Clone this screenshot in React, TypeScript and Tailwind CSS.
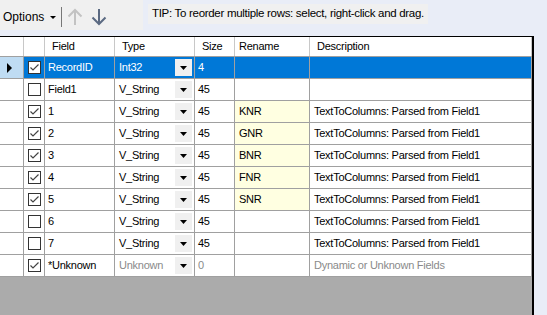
import { ReactNode } from "react"

type Row = {
    checked: boolean
    field: string
    type: string
    size: string
    rename: string
    desc: string
    selected?: boolean
    muted?: boolean
    yellow?: boolean
}

const rows: Row[] = [
    { checked: true, field: "RecordID", type: "Int32", size: "4", rename: "", desc: "", selected: true },
    { checked: false, field: "Field1", type: "V_String", size: "45", rename: "", desc: "" },
    { checked: true, field: "1", type: "V_String", size: "45", rename: "KNR", desc: "TextToColumns: Parsed from Field1", yellow: true },
    { checked: true, field: "2", type: "V_String", size: "45", rename: "GNR", desc: "TextToColumns: Parsed from Field1", yellow: true },
    { checked: true, field: "3", type: "V_String", size: "45", rename: "BNR", desc: "TextToColumns: Parsed from Field1", yellow: true },
    { checked: true, field: "4", type: "V_String", size: "45", rename: "FNR", desc: "TextToColumns: Parsed from Field1", yellow: true },
    { checked: true, field: "5", type: "V_String", size: "45", rename: "SNR", desc: "TextToColumns: Parsed from Field1", yellow: true },
    { checked: false, field: "6", type: "V_String", size: "45", rename: "", desc: "TextToColumns: Parsed from Field1" },
    { checked: false, field: "7", type: "V_String", size: "45", rename: "", desc: "TextToColumns: Parsed from Field1" },
    { checked: true, field: "*Unknown", type: "Unknown", size: "0", rename: "", desc: "Dynamic or Unknown Fields", muted: true },
]

function CheckBox({ checked }: { checked: boolean }) {
    return <div className="w-[13px] h-[13px] border border-[#333] bg-white flex items-center justify-center">
        {checked &&
            <svg width="11" height="11" viewBox="0 0 11 11">
                <path d="M1.5 5.5 L4 8 L9.5 2.5" fill="none" stroke="#444" strokeWidth="1.2" />
            </svg>}
    </div>
}

function Cell({ w, className, children }: { w: string, className?: string, children?: ReactNode }) {
    return <div className={`${w} shrink-0 h-full border-r border-[#a0a0a0] flex items-center whitespace-nowrap ${className ?? ""}`}>
        {children}
    </div>
}

function DataRow({ r }: { r: Row }) {
    const sel = r.selected
    const text = sel ? "text-white" : r.muted ? "text-[#8a8a8a]" : "text-black"
    return <div className={`flex h-[22px] border-b border-[#a0a0a0] ${sel ? "bg-[#0078d7]" : "bg-white"}`}>
        <div className={`w-[24px] shrink-0 h-full border-r border-[#a0a0a0] flex items-center pl-[7px] ${sel ? "bg-[#bfdcf3]" : "bg-white"}`}>
            {sel && <svg width="6" height="10" viewBox="0 0 6 10"><path d="M0 0 L5 5 L0 10 Z" fill="#000" /></svg>}
        </div>
        <Cell w="w-[21px]" className="justify-center">
            <CheckBox checked={r.checked} />
        </Cell>
        <Cell w="w-[70px]" className={`pl-[3px] ${sel ? "text-white" : "text-black"}`}>{r.field}</Cell>
        <Cell w="w-[80px]" className={`pl-[4px] justify-between pr-[2px] ${text}`}>
            <span>{r.type}</span>
            <div className="w-[17px] h-[17px] bg-[#f0f0f0] flex items-center justify-center">
                <svg width="7" height="4" viewBox="0 0 7 4"><path d="M0 0 H7 L3.5 4 Z" fill="#000" /></svg>
            </div>
        </Cell>
        <Cell w="w-[40px]" className={`pl-[3px] ${text}`}>{r.size}</Cell>
        <Cell w="w-[75px]" className={`pl-[4px] ${sel ? "text-white" : "text-black"} ${r.yellow ? "bg-[#ffffe1]" : ""}`}>{r.rename}</Cell>
        <Cell w="flex-1" className={`pl-[4px] ${text}`}>{r.desc}</Cell>
    </div>
}

export default function App() {
    return <div
        className="w-[547px] h-[315px] bg-[#e9edf7] flex flex-col overflow-hidden text-[11px] tracking-[-0.25px]"
        style={{ fontFamily: '"Liberation Sans", Arial, sans-serif' }}>
        <div className="flex h-[36px] shrink-0">
            <div className="w-[143px] h-[30px] bg-[#f0f0f0] flex items-center pt-[4px] tracking-normal">
                <span className="text-[12px] pl-[3px] text-black">Options</span>
                <svg className="ml-[6px]" width="6" height="3" viewBox="0 0 6 3"><path d="M0 0 H6 L3 3 Z" fill="#000" /></svg>
                <div className="ml-[5px] w-px h-[20px] bg-[#777]" />
                <svg className="ml-[5px]" width="16" height="18" viewBox="0 0 16 18">
                    <path d="M8 17 V2 M1.5 8.5 L8 2 L14.5 8.5" fill="none" stroke="#c3c3c3" strokeWidth="2" />
                </svg>
                <svg className="ml-[8px]" width="16" height="18" viewBox="0 0 16 18">
                    <path d="M8 1 V16 M1.5 9.5 L8 16 L14.5 9.5" fill="none" stroke="#5b6a82" strokeWidth="2" />
                </svg>
            </div>
            <div className="ml-[5px] h-[20px] bg-[#f0f0f0] flex items-center px-[4px] mt-[4px] text-[11.5px] tracking-[-0.3px] text-black">
                TIP: To reorder multiple rows: select, right-click and drag.
            </div>
        </div>
        <div className="w-[534px] flex-1 border-t border-r-2 border-black bg-[#ababab] flex flex-col">
            <div className="flex h-[20px] bg-white border-b border-[#a0a0a0] text-black">
                <Cell w="w-[24px]" className="border-[#c8c8c8]" />
                <Cell w="w-[21px]" className="border-[#c8c8c8]" />
                <Cell w="w-[70px]" className="pl-[7px] border-[#c8c8c8]">Field</Cell>
                <Cell w="w-[80px]" className="pl-[7px] border-[#c8c8c8]">Type</Cell>
                <Cell w="w-[40px]" className="pl-[7px] border-[#c8c8c8]">Size</Cell>
                <Cell w="w-[75px]" className="pl-[4px] border-[#c8c8c8]">Rename</Cell>
                <Cell w="flex-1" className="pl-[7px] border-[#c8c8c8]">Description</Cell>
            </div>
            {rows.map((r, i) => <DataRow key={i} r={r} />)}
        </div>
    </div>
}
